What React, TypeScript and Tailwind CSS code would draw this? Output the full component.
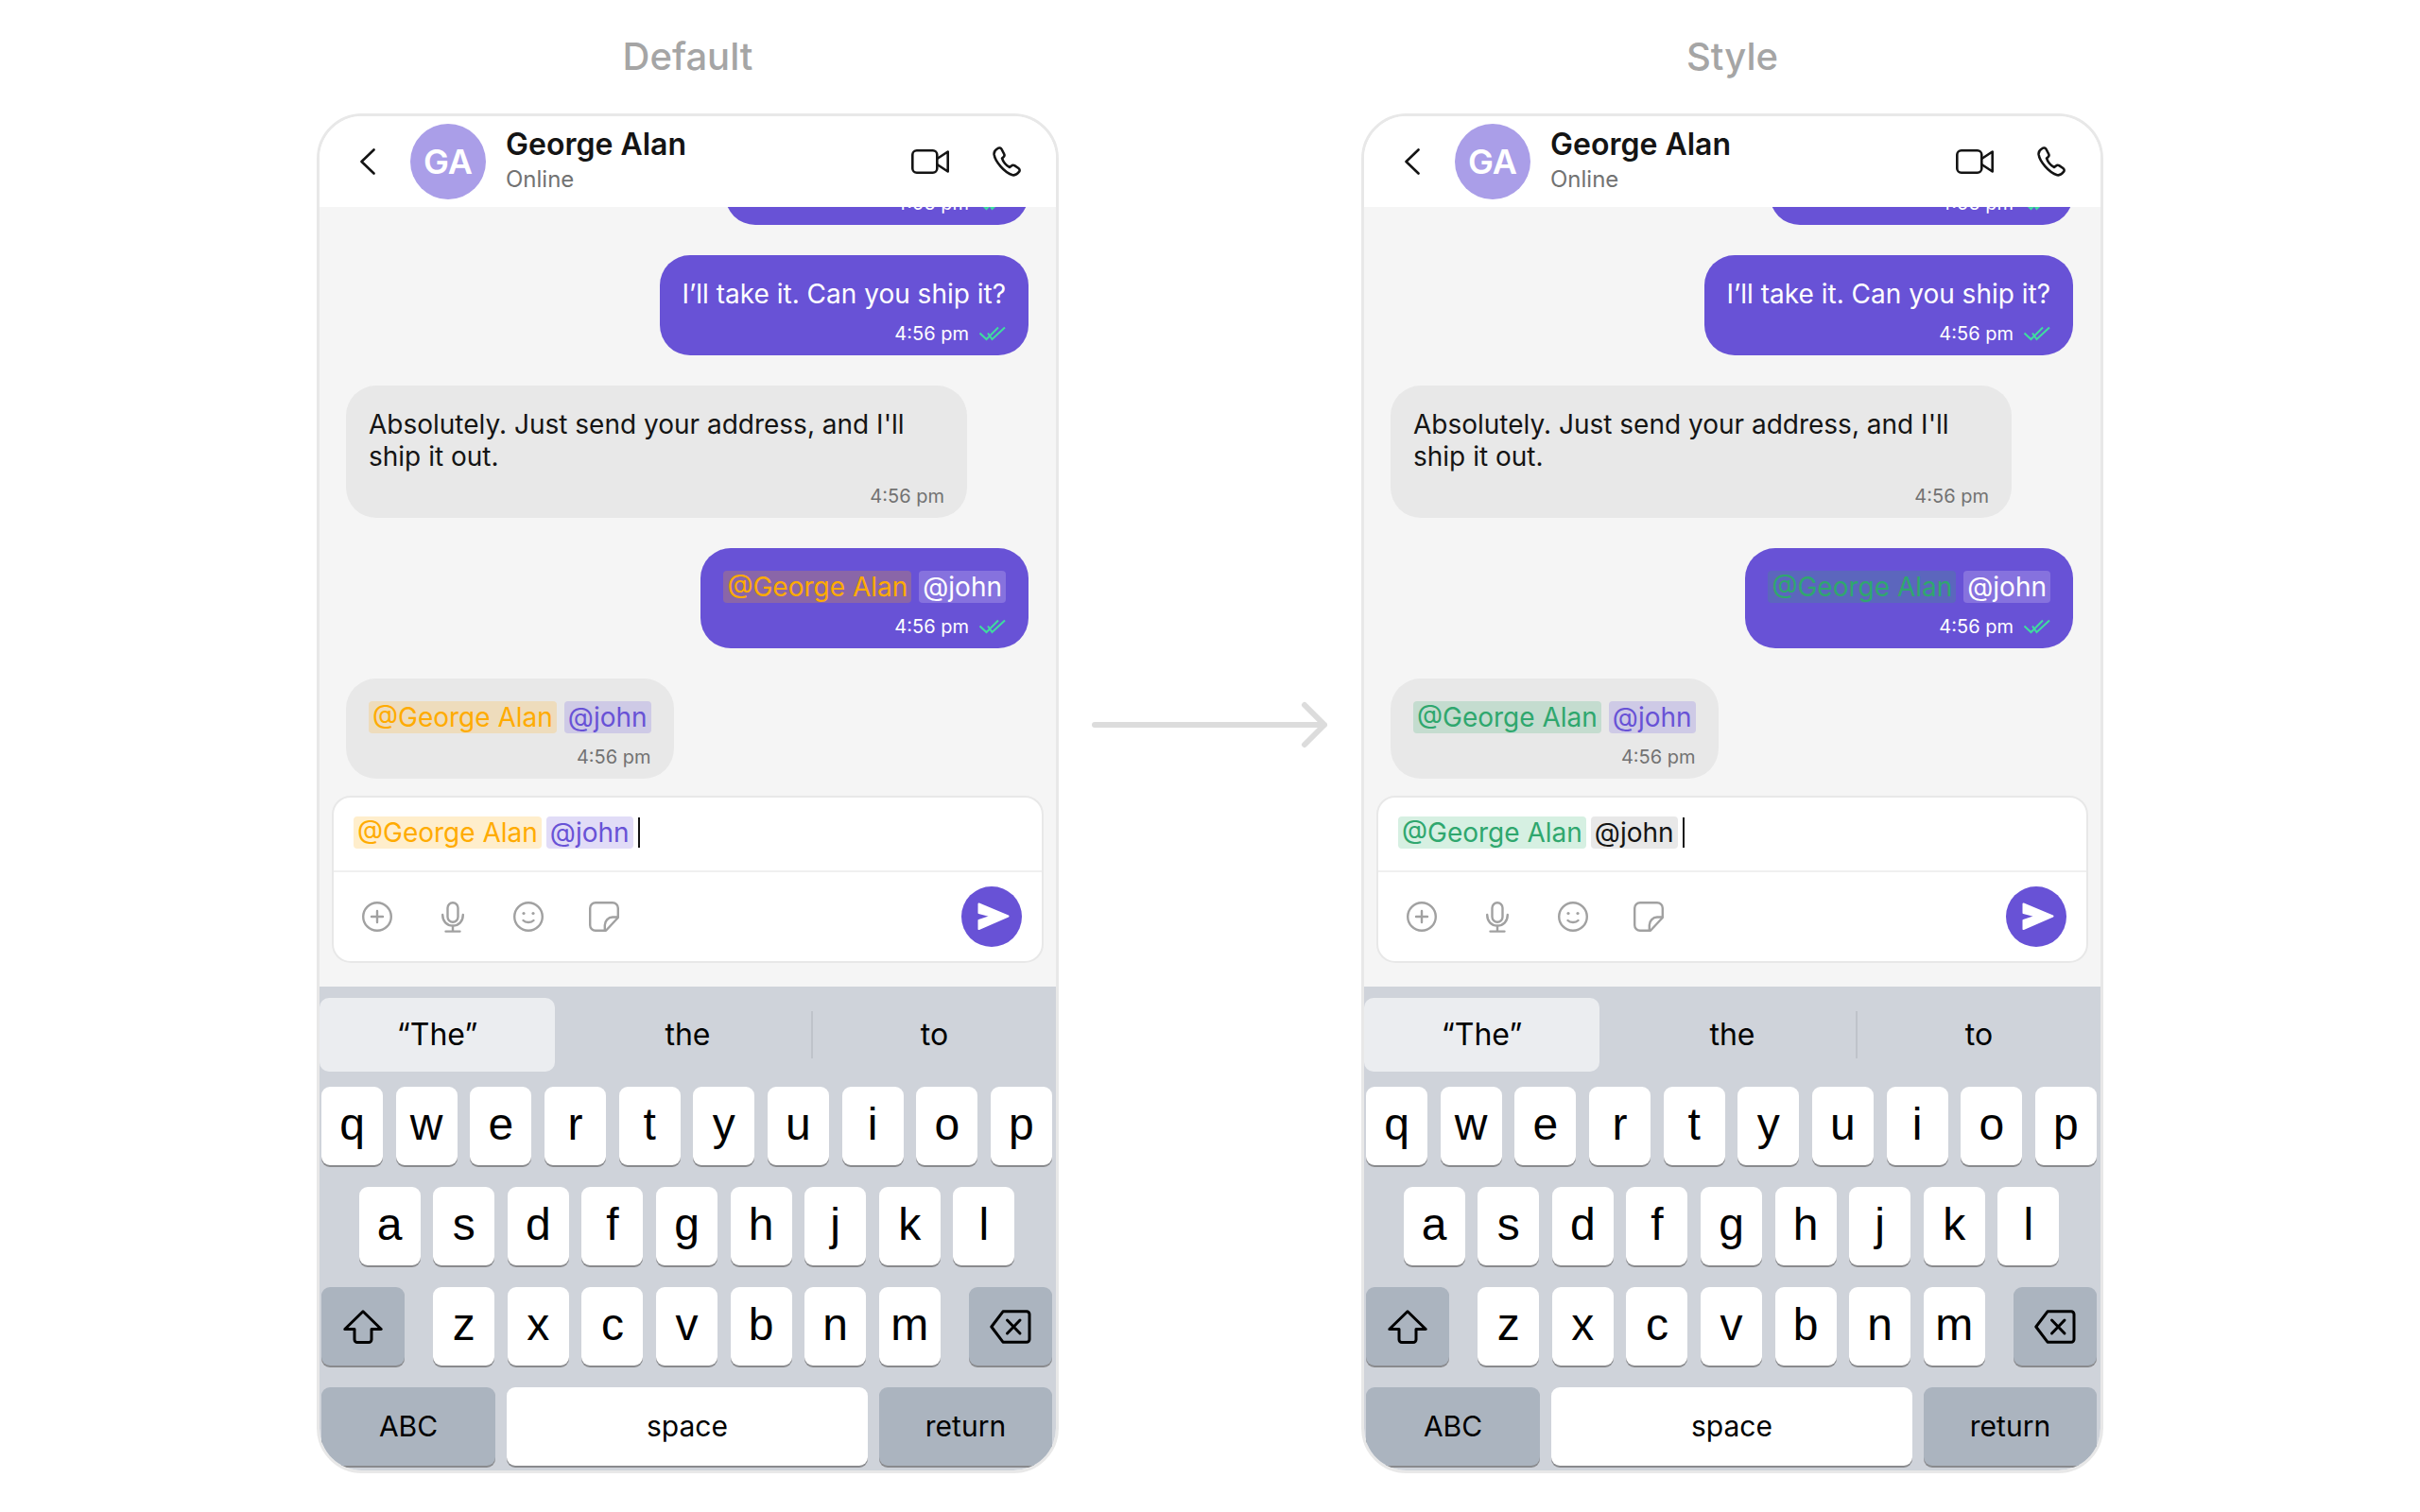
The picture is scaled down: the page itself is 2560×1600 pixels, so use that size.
import React from 'react';

type Theme = {
  sentName: string;
  receivedName: string;
  composerName: string;
  composerJohn: string;
};

const defaultTheme: Theme = {
  sentName: 'bg-[#8a66a8] text-[#ffab00]',
  receivedName: 'bg-[#eedcbc] text-[#ffab00]',
  composerName: 'bg-[#ffeecc] text-[#ffab00]',
  composerJohn: 'bg-[#e1dcf7] text-[#6852d6]',
};

const styledTheme: Theme = {
  sentName: 'bg-[#5c66bd] text-[#2fa76e]',
  receivedName: 'bg-[#c4dccf] text-[#2fa76e]',
  composerName: 'bg-[#d6f0e2] text-[#2fa76e]',
  composerJohn: 'bg-[#e8e8e8] text-[#141414]',
};

const Mention: React.FC<{ className: string; children: React.ReactNode }> = ({ className, children }) => (
  <span className={`inline-flex h-[34px] items-center rounded-[4px] px-[4px] text-[28px] leading-[34px] ${className}`}>
    {children}
  </span>
);

const Ticks = () => (
  <svg width="28" height="16" viewBox="0 0 28 16" fill="none" stroke="#3fdc9f" strokeWidth="2">
    <path d="M0.5 7.5 L7.5 14 L20 1.5" />
    <path d="M9 7.5 L13.5 14 L27 1.5" />
  </svg>
);

const Bubble: React.FC<{ sent?: boolean; className?: string; children?: React.ReactNode }> = ({
  sent,
  className = '',
  children,
}) => (
  <div
    className={`shrink-0 rounded-[32px] px-[24px] pt-[24px] pb-[8px] ${
      sent ? 'self-end bg-[#6852d6] text-white' : 'self-start bg-[#e8e8e8] text-[#141414]'
    } ${className}`}
  >
    {children}
    <div className="mt-[10px] flex h-[30px] items-center justify-end gap-[11px]">
      <span className={`text-[20px] ${sent ? 'text-white' : 'text-[#727272]'}`}>4:56 pm</span>
      {sent && <Ticks />}
    </div>
  </div>
);

const PlusIcon = () => (
  <svg width="32" height="32" viewBox="0 0 32 32" fill="none" stroke="#a1a1a1" strokeWidth="2.4" strokeLinecap="round">
    <circle cx="16" cy="16" r="14.8" />
    <path d="M16 10 V22 M10 16 H22" />
  </svg>
);

const MicIcon = () => (
  <svg width="24" height="33" viewBox="0 0 24 33" fill="none" stroke="#a1a1a1" strokeWidth="2.4" strokeLinecap="round">
    <rect x="6.5" y="1.2" width="11" height="20.5" rx="5.5" />
    <path d="M1.2 14 C1.2 21 5.5 25.6 12 25.6 C18.5 25.6 22.8 21 22.8 14" />
    <path d="M12 25.6 V31.6 M4.5 31.6 H19.5" />
  </svg>
);

const SmileIcon = () => (
  <svg width="32" height="32" viewBox="0 0 32 32" fill="none" stroke="#a1a1a1" strokeWidth="2.4" strokeLinecap="round">
    <circle cx="16" cy="16" r="14.8" />
    <circle cx="11" cy="12.5" r="1.6" fill="#a1a1a1" stroke="none" />
    <circle cx="21" cy="12.5" r="1.6" fill="#a1a1a1" stroke="none" />
    <path d="M10.5 20 C13 22.6 19 22.6 21.5 20" />
  </svg>
);

const StickerIcon = () => (
  <svg width="32" height="32" viewBox="0 0 32 32" fill="none" stroke="#a1a1a1" strokeWidth="2.4" strokeLinejoin="round">
    <path d="M7 1.2 H25 A5.8 5.8 0 0 1 30.8 7 V17 L18 30.8 H7 A5.8 5.8 0 0 1 1.2 25 V7 A5.8 5.8 0 0 1 7 1.2 Z" />
    <path d="M30.5 16.5 H25 C20.5 16.5 16.8 20.5 16.8 25 V30.5" />
  </svg>
);

const VideoIcon = () => (
  <svg width="40" height="26" viewBox="0 0 40 26" fill="none" stroke="#141414" strokeWidth="2.6" strokeLinejoin="round">
    <rect x="1.3" y="1.3" width="26" height="23.4" rx="4.5" />
    <path d="M27.3 10 L38.7 2.5 V23.5 L27.3 16" />
  </svg>
);

const CallIcon = () => (
  <svg width="30" height="32" viewBox="0 0 30 32" fill="none" stroke="#141414" strokeWidth="2.6" strokeLinejoin="round">
    <path d="M5.5 2 C7 1 8.8 1.4 9.6 3 L12.2 8 C12.8 9.2 12.5 10.4 11.5 11.2 L10 12.4 C11 16 14.5 20.6 18 22 L20 20.4 C21 19.6 22.2 19.6 23.2 20.2 L27.4 23 C28.8 24 29 25.6 28 26.8 C26.4 29 24 30.8 21.2 30.2 C12.5 28 2.6 15.6 1.6 8.4 C1.3 5.8 3.2 3.4 5.5 2 Z" />
  </svg>
);

const BackIcon = () => (
  <svg width="18" height="28" viewBox="0 0 18 28" fill="none" stroke="#141414" strokeWidth="2.6" strokeLinecap="round" strokeLinejoin="round">
    <path d="M15.5 1.5 L2.5 14 L15.5 26.5" />
  </svg>
);

const SendIcon = () => (
  <svg width="34" height="30" viewBox="0 0 34 30" fill="white" stroke="white" strokeWidth="2" strokeLinejoin="round">
    <path d="M1.5 1.5 L32.5 14.5 L1.5 28 V19 L15 14.5 L1.5 11 Z" />
  </svg>
);

const ShiftIcon = () => (
  <svg width="42" height="36" viewBox="0 0 42 36" fill="none" stroke="#000" strokeWidth="3" strokeLinejoin="round">
    <path d="M21 1.8 L40.2 20.5 H30 V31.5 A3 3 0 0 1 27 34.5 H15 A3 3 0 0 1 12 31.5 V20.5 H1.8 Z" />
  </svg>
);

const BackspaceIcon = () => (
  <svg width="44" height="36" viewBox="0 0 44 36" fill="none" stroke="#000" strokeWidth="3" strokeLinecap="round" strokeLinejoin="round">
    <path d="M14 1.8 H39 A3 3 0 0 1 42 4.8 V31.2 A3 3 0 0 1 39 34.2 H14 L1.8 18 Z" />
    <path d="M18.5 11 L32 25 M32 11 L18.5 25" />
  </svg>
);

const LetterKey: React.FC<{ letter: string }> = ({ letter }) => (
  <div className="flex h-[83px] w-[65px] items-center justify-center rounded-[9px] bg-white pb-[4px] font-['Liberation_Sans',sans-serif] text-[48px] leading-none text-black shadow-[0_2px_0_#898a8d]">
    {letter}
  </div>
);

const Keyboard = () => (
  <div className="flex flex-col bg-[#cfd3da] pt-[12px] pr-[4px] pb-[5px] pl-[2px]">
    <div className="mb-[16px] -mr-[4px] -ml-[2px] flex h-[78px] text-[32px] text-black">
      <div className="flex w-[249px] items-center justify-center rounded-[10px] bg-[#ebedf0]">“The”</div>
      <div className="flex flex-1 items-center justify-center pl-[10px]">the</div>
      <div className="my-[14px] w-[2px] bg-[#bfc3ca]" />
      <div className="flex w-[257px] items-center justify-center">to</div>
    </div>
    <div className="flex flex-col gap-[23px]">
      <div className="flex justify-between">
        {'qwertyuiop'.split('').map((k) => (
          <LetterKey key={k} letter={k} />
        ))}
      </div>
      <div className="flex justify-center gap-[13.6px]">
        {'asdfghjkl'.split('').map((k) => (
          <LetterKey key={k} letter={k} />
        ))}
      </div>
      <div className="flex justify-between">
        <div className="flex h-[83px] w-[88px] items-center justify-center rounded-[9px] bg-[#abb4bf] shadow-[0_2px_0_#898a8d]">
          <ShiftIcon />
        </div>
        <div className="flex gap-[13.6px]">
          {'zxcvbnm'.split('').map((k) => (
            <LetterKey key={k} letter={k} />
          ))}
        </div>
        <div className="flex h-[83px] w-[88px] items-center justify-center rounded-[9px] bg-[#abb4bf] shadow-[0_2px_0_#898a8d]">
          <BackspaceIcon />
        </div>
      </div>
      <div className="flex gap-[12px] text-[30px] text-black">
        <div className="flex h-[83px] w-[184px] items-center justify-center rounded-[9px] bg-[#abb4bf] shadow-[0_2px_0_#898a8d]">
          ABC
        </div>
        <div className="flex h-[83px] flex-1 items-center justify-center rounded-[9px] bg-white shadow-[0_2px_0_#898a8d]">
          space
        </div>
        <div className="flex h-[83px] w-[183px] items-center justify-center rounded-[9px] bg-[#abb4bf] shadow-[0_2px_0_#898a8d]">
          return
        </div>
      </div>
    </div>
  </div>
);

const PhoneColumn: React.FC<{ title: string; theme: Theme }> = ({ title, theme }) => (
  <div className="w-[785px] shrink-0">
    <div className="flex h-[120px] items-center justify-center pb-[-4px] text-[40px] leading-none font-medium text-[#a5a5a5]">
      {title}
    </div>
    <div className="flex h-[1439px] flex-col overflow-hidden rounded-[48px] border-[3px] border-[#e8e8e8] bg-white">
      {/* Header */}
      <div className="z-10 flex h-[96px] shrink-0 items-center bg-white pr-[37px] pl-[42px]">
        <BackIcon />
        <div className="ml-[36px] flex h-[80px] w-[80px] items-center justify-center rounded-full bg-[#aa9ee8] text-[36px] font-semibold text-white">
          GA
        </div>
        <div className="ml-[21px] flex-1">
          <div className="text-[32px] leading-[38px] font-semibold text-[#141414]">George Alan</div>
          <div className="text-[24px] leading-[36px] text-[#727272]">Online</div>
        </div>
        <VideoIcon />
        <div className="ml-[46px]">
          <CallIcon />
        </div>
      </div>

      {/* Messages */}
      <div className="flex min-h-0 flex-1 flex-col overflow-hidden bg-[#f5f5f5]">
        <div className="flex flex-col gap-[32px] pr-[29px] pl-[28px]">
          <Bubble sent className="-mt-[87px] h-[106px] w-[321px]">
            <div className="h-[34px]" />
          </Bubble>
          <Bubble sent>
            <p className="text-[28px] leading-[34px]">I’ll take it. Can you ship it?</p>
          </Bubble>
          <Bubble className="w-[657px]">
            <p className="text-[28px] leading-[34px]">Absolutely. Just send your address, and I'll ship it out.</p>
          </Bubble>
          <Bubble sent>
            <div className="flex gap-[8px]">
              <Mention className={theme.sentName}>@George Alan</Mention>
              <Mention className="bg-[#8672de] text-white">@john</Mention>
            </div>
          </Bubble>
          <Bubble>
            <div className="flex gap-[8px]">
              <Mention className={theme.receivedName}>@George Alan</Mention>
              <Mention className="bg-[#cecae6] text-[#6852d6]">@john</Mention>
            </div>
          </Bubble>
        </div>

        {/* Composer */}
        <div className="mx-[13px] mt-[18px] mb-[17px] shrink-0 rounded-[20px] border-2 border-[#e8e8e8] bg-white">
          <div className="flex h-[79px] items-start gap-[5px] border-b-2 border-[#f0f0f0] pt-[20px] pl-[21px]">
            <Mention className={theme.composerName}>@George Alan</Mention>
            <Mention className={theme.composerJohn}>@john</Mention>
            <div className="mt-px h-[32px] w-[2px] bg-[#141414]" />
          </div>
          <div className="flex h-[94px] items-center pr-[21px] pl-[22px]">
            <div className="flex flex-1 items-center gap-[32px]">
              <div className="flex w-[48px] justify-center">
                <PlusIcon />
              </div>
              <div className="flex w-[48px] justify-center">
                <MicIcon />
              </div>
              <div className="flex w-[48px] justify-center">
                <SmileIcon />
              </div>
              <div className="flex w-[48px] justify-center">
                <StickerIcon />
              </div>
            </div>
            <div className="flex h-[64px] w-[64px] items-center justify-center rounded-full bg-[#6852d6] pl-[3px]">
              <SendIcon />
            </div>
          </div>
        </div>
      </div>

      <Keyboard />
    </div>
  </div>
);

export default function App() {
  return (
    <div className="flex h-[1600px] w-[2560px] overflow-hidden bg-white pl-[335px] font-['Inter',sans-serif]">
      <PhoneColumn title="Default" theme={defaultTheme} />
      <div className="flex w-[320px] shrink-0 justify-center pt-[742px]">
        <svg width="250" height="50" viewBox="0 0 250 50" fill="none" stroke="#dcdcdc" strokeWidth="6" strokeLinecap="round" strokeLinejoin="round">
          <path d="M3 25 H246 M225 4 L246 25 L225 46" />
        </svg>
      </div>
      <PhoneColumn title="Style" theme={styledTheme} />
    </div>
  );
}
